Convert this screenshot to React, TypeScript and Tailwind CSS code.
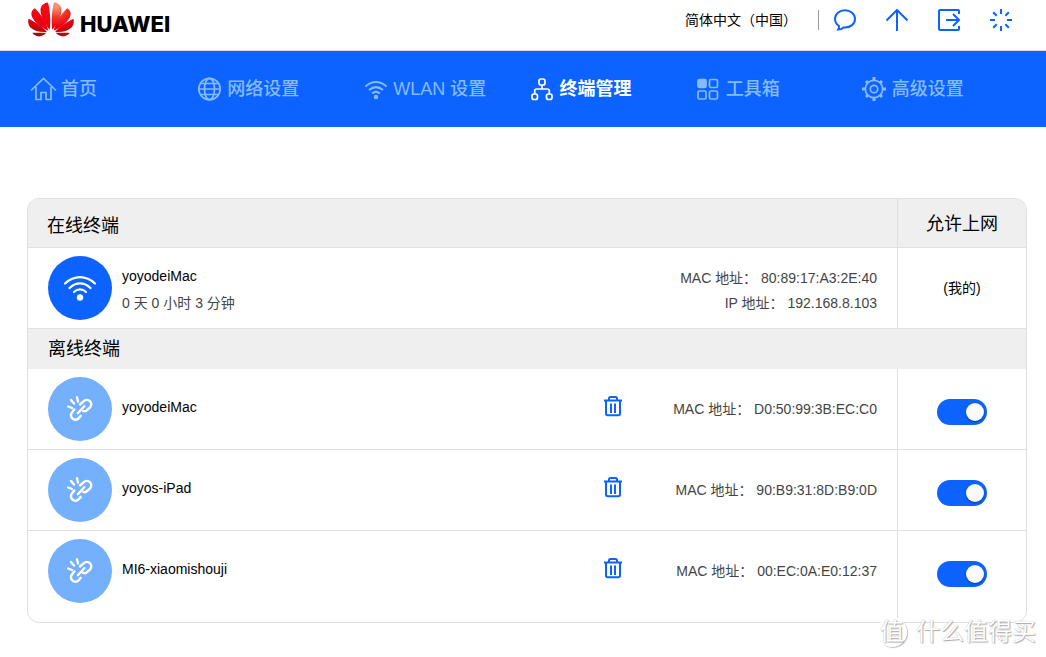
import { useState } from "react"
import type { ReactNode } from "react"
import clsx from "clsx"

type Device = {
  name: string
  mac: string
}

const offlineDevices: Device[] = [
  { name: "yoyodeiMac", mac: "D0:50:99:3B:EC:C0" },
  { name: "yoyos-iPad", mac: "90:B9:31:8D:B9:0D" },
  { name: "MI6-xiaomishouji", mac: "00:EC:0A:E0:12:37" },
]

function Petals() {
  return (
    <>
      <path d="M64 82C50 64 36 42 37 21C38 8 50 2 59 1C65 20 68 60 64 82Z" />
      <path d="M60 85C40 76 12 56 10 37C9 28 14 21 20 18C36 32 56 62 60 85Z" />
      <path d="M56 88C38 90 18 86 8 76C0 68-1 56 2 49C20 58 46 74 56 88Z" />
      <path d="M13 91L54 91C48 98 38 103 28 101C20 99 16 96 13 91Z" />
    </>
  )
}

function Logo() {
  return (
    <a href="#home" aria-label="HUAWEI" className="flex items-center gap-[6px] text-black">
      <svg width="46" height="35" viewBox="0 0 136 103" aria-hidden="true">
        <defs>
          <linearGradient id="petal" gradientUnits="userSpaceOnUse" x1="60" y1="0" x2="20" y2="103">
            <stop offset="0" stopColor="#f0101a" />
            <stop offset="0.6" stopColor="#ee0010" />
            <stop offset="1" stopColor="#8e0a0c" />
          </linearGradient>
          <radialGradient id="shine" gradientUnits="userSpaceOnUse" cx="52" cy="12" r="80">
            <stop offset="0" stopColor="#f9a080" />
            <stop offset="0.4" stopColor="#ee3a2c" />
            <stop offset="0.75" stopColor="#ee0010" />
            <stop offset="1" stopColor="#b00a10" />
          </radialGradient>
        </defs>
        <g fill="url(#petal)">
          <Petals />
        </g>
        <g fill="url(#shine)" transform="translate(136 0) scale(-1 1)">
          <Petals />
        </g>
      </svg>
      <span className="pt-2 font-[Inter,sans-serif] text-[22px] leading-6 font-extrabold">HUAWEI</span>
    </a>
  )
}

const toolIcons = [
  {
    label: "消息",
    icon: <path d="M5 17C2.500 15.300 1 13 1 10C1 5 5.500 1.200 11 1.200S21 5 21 10S16.500 18.500 11 18.500C10.500 18.500 10 18.500 9.500 18.400C8 19.800 6.300 20.500 4.200 20.600C4.900 19.500 5.200 18.300 5 17Z" />,
  },
  { label: "更新", icon: <path d="M11 22V1M.500 11.500L11 1L21.500 11.500" /> },
  {
    label: "退出",
    icon: <path d="M21 5V2C21 1.300 20.700 1 20 1H2C1.300 1 1 1.300 1 2V20C1 20.700 1.300 21 2 21H20C20.700 21 21 20.700 21 20V17M8 11H20.500M15 5L21 11L15 17" />,
  },
  {
    label: "状态",
    icon: <path d="M11 0V5M11 17V22M0 11H5M17 11H22M3.200 3.200L6.700 6.700M15.300 15.300L18.800 18.800M18.800 3.200L15.300 6.700M6.700 15.300L3.200 18.800" />,
  },
]

function TopBar() {
  return (
    <header className="flex h-[51px] items-start justify-between border-b border-[#dcdcdc] pt-[2px] pr-[34px] pl-7">
      <Logo />
      <div className="flex items-center pt-[7px]">
        <select
          aria-label="语言"
          className="w-[133px] appearance-none bg-transparent text-sm leading-5 text-black"
        >
          <option>简体中文（中国）</option>
        </select>
        <span className="mr-[15px] h-5 w-px bg-[#999]" />
        <div className="flex gap-[30px]">
          {toolIcons.map(({ label, icon }) => (
            <button key={label} type="button" aria-label={label} title={label}>
              <svg width="22" height="22" viewBox="0 0 22 22" fill="none" stroke="#0d63ff" strokeWidth="2">
                {icon}
              </svg>
            </button>
          ))}
        </div>
      </div>
    </header>
  )
}

const navItems: { label: string; href: string; icon: ReactNode }[] = [
  {
    label: "首页",
    href: "#home",
    icon: <path d="M1 14.500L13.500 2.500L26 14.500M6 11V23.500H11V16.500H16V23.500H21V11" />,
  },
  {
    label: "网络设置",
    href: "#network",
    icon: (
      <g transform="translate(.5 0)">
        <circle cx="13" cy="13" r="10.700" />
        <ellipse cx="13" cy="13" rx="5" ry="10.700" />
        <path d="M4.500 7.500H21.500M2 13H24M4.500 18.500H21.500" />
      </g>
    ),
  },
  {
    label: "WLAN 设置",
    href: "#wlan",
    icon: (
      <g transform="translate(1 0)" strokeWidth="2">
        <path d="M2.500 10.500C9 4.600 17 4.600 23.500 10.500M6 14C10.500 10.300 15.500 10.300 20 14M9.300 17.500C11.500 15.600 14.500 15.600 16.700 17.500" />
        <circle cx="13" cy="21" r="2.200" fill="currentColor" stroke="none" />
      </g>
    ),
  },
  {
    label: "终端管理",
    href: "#devices",
    icon: (
      <>
        <rect x="10" y="3" width="6" height="6" rx="2" />
        <rect x="3" y="18" width="5.500" height="5.500" rx="2" />
        <rect x="17.500" y="18" width="5.500" height="5.500" rx="2" />
        <path d="M13 9V13M5.700 18V15C5.700 13.600 6.500 13 7.700 13H18.300C19.500 13 20.300 13.600 20.300 15V18" />
      </>
    ),
  },
  {
    label: "工具箱",
    href: "#tools",
    icon: (
      <>
        <rect x="3" y="3.500" width="8" height="8" rx="1.500" fill="currentColor" />
        <rect x="14.500" y="3.500" width="8" height="8" rx="1.500" />
        <rect x="3" y="15" width="8" height="8" rx="1.500" />
        <rect x="14.500" y="15" width="8" height="8" rx="1.500" />
      </>
    ),
  },
  {
    label: "高级设置",
    href: "#advanced",
    icon: (
      <>
        <circle cx="13" cy="13" r="8.700" />
        <circle cx="13" cy="13" r="3.700" />
        <path
          d="M13 1V4.500M13 21.500V25M1 13H4.500M21.500 13H25M5 5L7 7M19 19L21 21M21 5L19 7M7 19L5 21"
          strokeWidth="3"
        />
      </>
    ),
  },
]

function NavBar() {
  return (
    <nav className="grid grid-cols-6 bg-[#0d63ff] pr-[19px] pl-[30px]">
      {navItems.map(({ label, href, icon }) => {
        const active = href === "#devices"
        return (
          <a
            key={href}
            href={href}
            aria-current={active ? "page" : undefined}
            className={clsx(
              "flex h-[76px] items-center gap-1 text-lg whitespace-nowrap",
              active ? "font-bold text-white" : "font-medium text-[#86bbff]"
            )}
          >
            <svg width="27" height="26" viewBox="0 0 27 26" fill="none" stroke="currentColor" strokeWidth="1.7" className="shrink-0">
              {icon}
            </svg>
            {label}
          </a>
        )
      })}
    </nav>
  )
}

function OnlineIcon() {
  return (
    <span className="flex size-16 shrink-0 items-center justify-center rounded-full bg-[#0d63ff]">
      <svg width="34" height="28" viewBox="0 0 34 28" fill="none" stroke="#fff" strokeWidth="2.2" strokeLinecap="round">
        <path d="M2 9.500C11 1 23 1 32 9.500M6.500 14C13 7.800 21 7.800 27.500 14M11 18C14.500 14.500 19.500 14.500 23 18" />
        <circle cx="17" cy="23.500" r="3.200" fill="#fff" stroke="none" />
      </svg>
    </span>
  )
}

function OfflineIcon() {
  return (
    <span className="flex size-16 shrink-0 items-center justify-center rounded-full bg-[#74b0fb]">
      <svg width="28" height="28" viewBox="0 0 28 28" fill="none" stroke="#fff" strokeWidth="2.4" strokeLinecap="round">
        <path d="M14 9.500L17.500 6.300C19.500 4.500 22.300 4.500 24 6.300C25.800 8.200 25.600 10.800 23.800 12.600L20.500 15.500C19.500 16.300 18.300 16.500 17.200 16" />
        <path d="M18.300 11.200L11.800 18.200" />
        <path d="M8.300 14.500L6.300 17C4.600 19 4.700 21.700 6.300 23.400C8.100 25.200 10.800 25.200 12.600 23.400L14.800 20.800" />
        <path d="M11 2.200L12 6.500M5 5L8 8.500M2.200 11.500L6 13" />
      </svg>
    </span>
  )
}

function TrashIcon() {
  return (
    <svg width="20" height="22" viewBox="0 0 20 22" fill="none" stroke="#0d63ff" strokeWidth="2">
      <path d="M1 5.500H19M6 5V3.500C6 2.500 6.500 2 7.500 2H12.500C13.500 2 14 2.500 14 3.500V5M3 5.500V18.500C3 19.700 3.500 20.200 4.700 20.200H15.300C16.500 20.200 17 19.700 17 18.500V5.500" />
      <path d="M8 8.500V18M12 8.500V18" />
    </svg>
  )
}

function OfflineRow({ name, mac }: Device) {
  const [allowed, setAllowed] = useState(true)

  return (
    <tr className="group">
      <td className="border-b border-[#e0e0e0] py-2 pl-5 group-last:border-b-0 group-last:pb-[19px]">
        <div className="flex items-center gap-[10px]">
          <OfflineIcon />
          <span className="pb-1 text-black">{name}</span>
        </div>
      </td>
      <td className="w-10 border-b border-[#e0e0e0] pt-2 pb-[14px] text-center group-last:border-b-0 group-last:pb-[25px]">
        <button type="button" aria-label={`删除 ${name}`} className="align-middle">
          <TrashIcon />
        </button>
      </td>
      <td className="w-[264px] border-b border-[#e0e0e0] py-2 pr-5 text-right group-last:border-b-0 group-last:pb-[19px]">
        MAC 地址： {mac}
      </td>
      <td className="w-[129px] border-b border-l border-[#e0e0e0] pt-[14px] pb-2 text-center group-last:border-b-0 group-last:pb-[19px]">
        <input
          type="checkbox"
          role="switch"
          aria-label={`允许 ${name} 上网`}
          checked={allowed}
          onChange={(e) => setAllowed(e.target.checked)}
          className="inline-flex h-[26px] w-[50px] appearance-none items-center justify-start rounded-full bg-[#bbb] px-[3px] align-middle before:size-[18px] before:rounded-full before:bg-[#fafafa] before:shadow-[0_1px_2px_rgba(0,0,0,0.4)] checked:justify-end checked:bg-[#0d63ff]"
        />
      </td>
    </tr>
  )
}

function DeviceTable() {
  return (
    <div className="overflow-hidden rounded-xl border border-[#e0e0e0]">
      <table className="w-full border-separate border-spacing-0 text-sm text-[#444]">
        <thead>
          <tr className="bg-[#efefef] text-lg text-black">
            <th colSpan={3} className="h-[49px] border-b border-[#e0e0e0] pt-[6px] pl-[19px] text-left font-normal">
              在线终端
            </th>
            <th className="w-[129px] border-b border-l border-[#e0e0e0] pt-[2px] font-normal">允许上网</th>
          </tr>
        </thead>
        <tbody>
          <tr>
            <td className="border-b border-[#e0e0e0] py-2 pl-5">
              <div className="flex items-center gap-[10px]">
                <OnlineIcon />
                <div className="pt-1 leading-[27px]">
                  <p className="text-black">yoyodeiMac</p>
                  <p>0 天 0 小时 3 分钟</p>
                </div>
              </div>
            </td>
            <td colSpan={2} className="border-b border-[#e0e0e0] pt-[6px] pr-5 text-right leading-[25px]">
              <p>MAC 地址： 80:89:17:A3:2E:40</p>
              <p>IP 地址： 192.168.8.103</p>
            </td>
            <td className="border-b border-l border-[#e0e0e0] text-center text-black">(我的)</td>
          </tr>
          <tr className="bg-[#efefef] text-lg text-black">
            <th colSpan={4} className="h-10 pl-5 text-left font-normal">
              离线终端
            </th>
          </tr>
        </tbody>
        <tbody>
          {offlineDevices.map((device) => (
            <OfflineRow key={device.mac} {...device} />
          ))}
        </tbody>
      </table>
    </div>
  )
}

function Watermark() {
  return (
    <div className="pointer-events-none absolute right-[10px] bottom-[9px] flex items-center gap-[9px] text-2xl text-white [text-shadow:1px_1px_1px_#aaa,0_0_1px_#aaa]">
      <span className="flex size-[30px] items-center justify-center rounded-full border-2 border-white bg-white/60 shadow-[1px_1px_1px_#bbb]">
        值
      </span>
      什么值得买
    </div>
  )
}

export default function App() {
  return (
    <div className="relative min-h-screen bg-white font-['Liberation_Sans','Noto_Sans_CJK_SC',sans-serif]">
      <TopBar />
      <NavBar />
      <main className="pt-[71px] pr-[19px] pb-[34px] pl-[27px]">
        <DeviceTable />
      </main>
      <Watermark />
    </div>
  )
}
